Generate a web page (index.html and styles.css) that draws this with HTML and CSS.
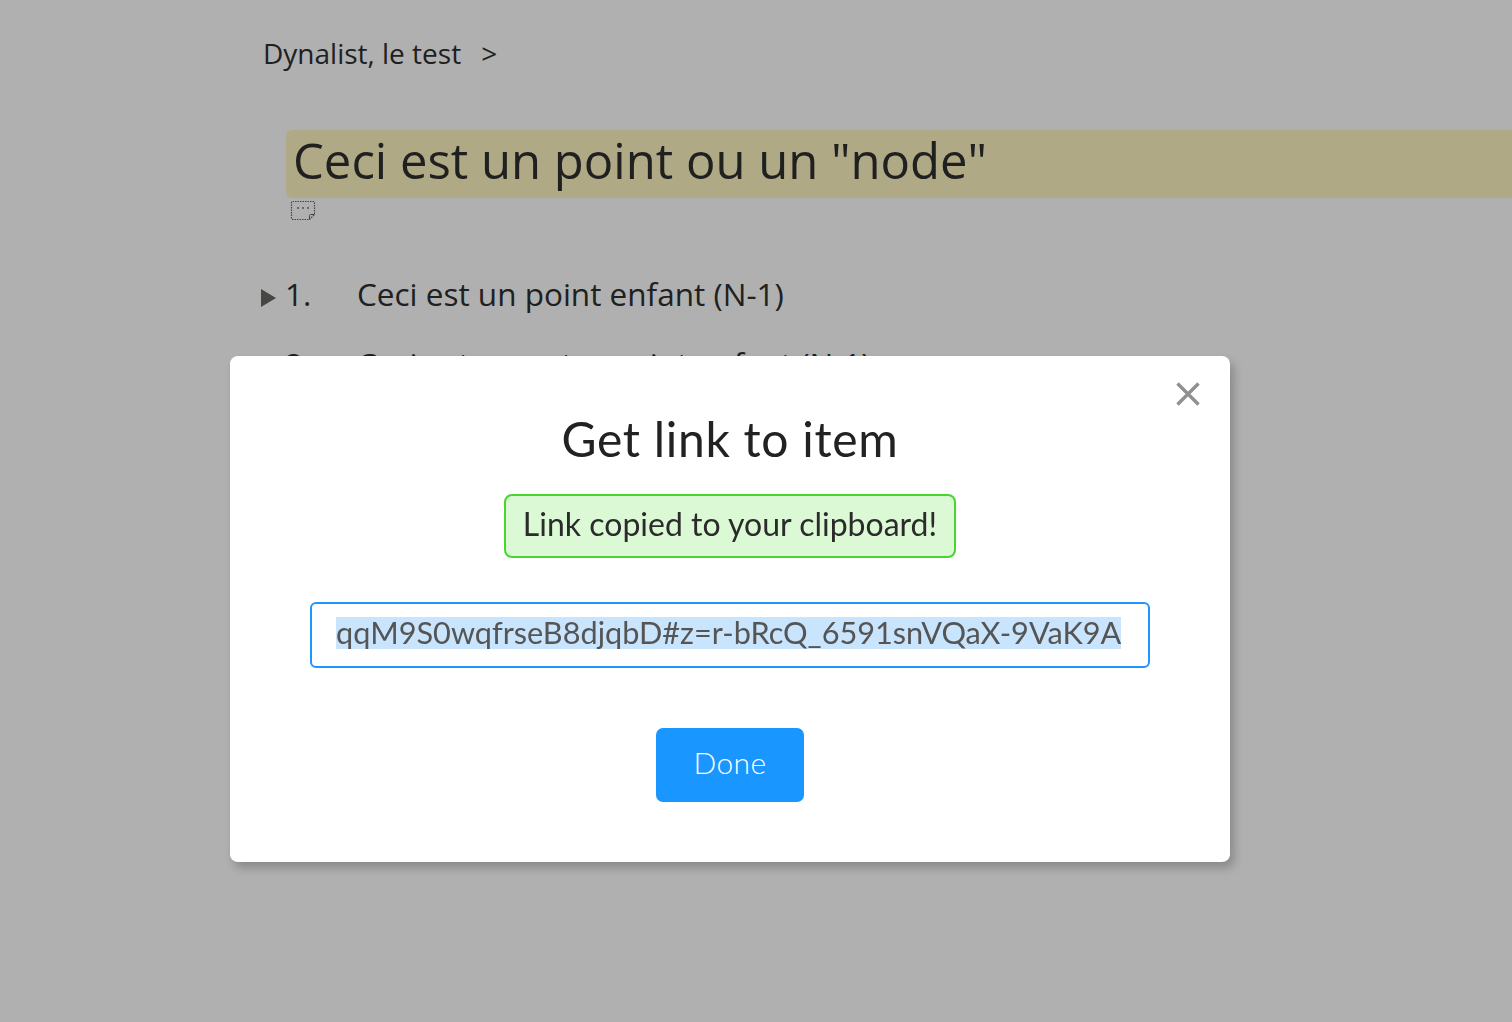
FILE: index.html
```html
<!DOCTYPE html>
<html lang="fr">
<head>
<meta charset="utf-8">
<title>Dynalist</title>
<link rel="stylesheet" href="styles.css">
</head>
<body>
<main class="doc">
  <nav class="crumbs"><span>Dynalist, le test</span><span class="sep">&gt;</span></nav>
  <h1 class="title">Ceci est un point ou un "node"</h1>
  <svg class="note" width="26" height="22" viewBox="0 0 26 22" aria-hidden="true">
    <path d="M2.5 1.5h21a1 1 0 0 1 1 1v12l-5 5h-17a1 1 0 0 1-1-1v-16a1 1 0 0 1 1-1z" fill="none" stroke="#666" stroke-width="1.2" stroke-dasharray="1.5 1"/>
    <path d="M24.5 14.5h-4a1 1 0 0 0-1 1v4" fill="none" stroke="#666" stroke-width="1"/>
    <circle cx="8" cy="8" r="1" fill="#777"/><circle cx="13" cy="8" r="1" fill="#777"/><circle cx="18" cy="8" r="1" fill="#777"/>
  </svg>
  <ol class="items">
    <li class="item"><span class="tri"></span><span class="num">1.</span><span>Ceci est un point enfant (N-1)</span></li>
    <li class="item"><span class="tri hidden"></span><span class="num">2.</span><span>Ceci est un autre point enfant (N-1)</span></li>
  </ol>
</main>
<div class="overlay"></div>
<section class="modal">
  <svg class="close" width="26" height="26" viewBox="0 0 26 26" aria-label="Close">
    <path d="M2.5 2.5l21 21M23.5 2.5l-21 21" stroke="#8f918e" stroke-width="3.4" fill="none"/>
  </svg>
  <h2 class="modal-title">Get link to item</h2>
  <p class="notice">Link copied to your clipboard!</p>
  <div class="field"><span class="sel">qqM9S0wqfrseB8djqbD#z=r-bRcQ_6591snVQaX-9VaK9A</span></div>
  <button class="done" type="button">Done</button>
</section>
</body>
</html>
```
FILE: styles.css
```css
html, body {
  margin: 0;
  height: 100%;
  overflow: hidden;
  background: #fff;
}
body {
  font-family: "Open Sans", "Noto Sans", sans-serif;
  color: #2f2f2f;
}
.doc {
  padding: 34px 0 0 286px;
}
.crumbs {
  display: flex;
  gap: 20px;
  margin-left: -23px;
  font-size: 28px;
  line-height: 38px;
}
.title {
  margin: 58px 0 0;
  padding: 0 0 0 7px;
  height: 68px;
  background: #fff5c1;
  border-radius: 6px 0 0 6px;
  font-weight: 400;
  font-size: 49px;
  line-height: 60px;
}
.note {
  display: block;
  margin: 2px 0 0 4px;
}
.items {
  list-style: none;
  margin: 52px 0 0 -25px;
  padding: 0;
  display: flex;
  flex-direction: column;
  gap: 30px;
}
.item {
  display: flex;
  align-items: center;
  height: 40px;
  font-size: 31.5px;
  line-height: 40px;
}
.tri {
  width: 0;
  height: 0;
  margin: 8px 9px 0 0;
  border-left: 15px solid #666762;
  border-top: 9px solid transparent;
  border-bottom: 9px solid transparent;
}
.tri.hidden { visibility: hidden; }
.num {
  width: 72px;
}
.overlay {
  position: fixed;
  inset: 0;
  background: rgba(0, 0, 0, 0.31);
}
.modal {
  position: absolute;
  left: 230px;
  top: 356px;
  width: 1000px;
  height: 506px;
  box-sizing: border-box;
  padding-top: 51px;
  display: flex;
  flex-direction: column;
  align-items: center;
  background: #fff;
  border-radius: 8px;
  box-shadow: 4px 6px 10px rgba(0, 0, 0, 0.22);
  font-family: "Lato", sans-serif;
  color: #222;
}
.close {
  position: absolute;
  top: 25px;
  right: 29px;
}
.modal-title {
  margin: 0;
  font-weight: 400;
  font-size: 48px;
  line-height: 64px;
  letter-spacing: 0.7px;
}
.notice {
  margin: 23px 0 0;
  width: 452px;
  height: 64px;
  box-sizing: border-box;
  padding-bottom: 6px;
  display: flex;
  align-items: center;
  justify-content: center;
  background: #dcf9d6;
  border: 2px solid #46d62e;
  border-radius: 8px;
  font-size: 32px;
  color: #2b2b2b;
}
.field {
  margin-top: 44px;
  width: 840px;
  height: 66px;
  box-sizing: border-box;
  padding: 0 0 4px 24px;
  display: flex;
  align-items: center;
  border: 2px solid #1e96ff;
  border-radius: 6px;
  font-size: 30.7px;
  color: #555;
  white-space: nowrap;
  overflow: hidden;
}
.sel {
  background: #c9e5fd;
  line-height: 32px;
}
.done {
  margin-top: 60px;
  width: 148px;
  height: 74px;
  padding: 0 0 6px;
  border: 0;
  border-radius: 7px;
  background: #1996ff;
  color: #fff;
  font-family: inherit;
  font-size: 30px;
  font-weight: 300;
  letter-spacing: 0.4px;
}
```
